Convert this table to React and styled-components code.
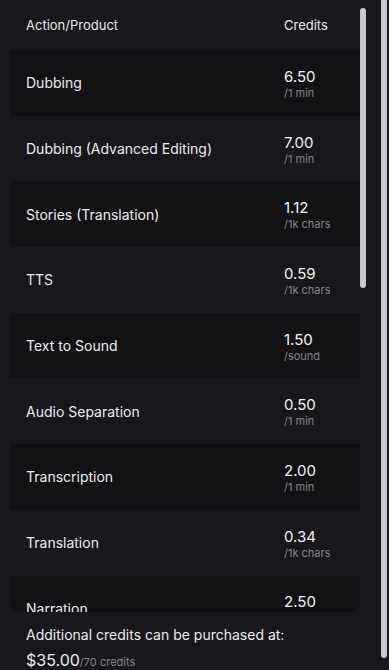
import { createGlobalStyle, styled } from "styled-components";

const rates = [
  { name: "Dubbing", price: "6.50", unit: "/1 min" },
  { name: "Dubbing (Advanced Editing)", price: "7.00", unit: "/1 min" },
  { name: "Stories (Translation)", price: "1.12", unit: "/1k chars" },
  { name: "TTS", price: "0.59", unit: "/1k chars" },
  { name: "Text to Sound", price: "1.50", unit: "/sound" },
  { name: "Audio Separation", price: "0.50", unit: "/1 min" },
  { name: "Transcription", price: "2.00", unit: "/1 min" },
  { name: "Translation", price: "0.34", unit: "/1k chars" },
  { name: "Narration", price: "2.50", unit: "/1 min" },
];

const App = () => {
  return (
    <Page>
      <GlobalStyle />
      <Frame>
        <Panel>
          <HeaderRow>
            <span>Action/Product</span>
            <span>Credits</span>
          </HeaderRow>
          {rates.map((r, i) => (
            <Row key={r.name} $dark={i % 2 === 0}>
              <Name>{r.name}</Name>
              <Value>
                <Price>{r.price}</Price>
                <Unit>{r.unit}</Unit>
              </Value>
            </Row>
          ))}
        </Panel>
        <ScrollThumb />
      </Frame>
      <Footer>
        <p>Additional credits can be purchased at:</p>
        <Total>
          $35.00<small>/70 credits</small>
        </Total>
      </Footer>
      <PageThumb />
    </Page>
  );
};

export default App;

const GlobalStyle = createGlobalStyle`
  html, body {
    margin: 0;
    background: #18171c;
    color: #ececee;
    font-family: Inter, "Noto Sans", sans-serif;
  }
  html {
    scrollbar-width: none;
  }
`;

const Page = styled.div`
  padding: 0 29px 0 10px;
`;

const Frame = styled.div`
  position: relative;
`;

const Panel = styled.div`
  height: 612px;
  overflow: hidden;
  border-radius: 0 0 10px 10px;
`;

/* custom scrollbar thumbs, drawn over the content */
const ScrollThumb = styled.div`
  position: absolute;
  top: 8px;
  right: -6px;
  width: 6px;
  height: 280px;
  border-radius: 3px;
  background: #c9c8cd;
`;

const PageThumb = styled.div`
  position: fixed;
  top: 0;
  right: 2px;
  width: 6px;
  height: 658px;
  border-radius: 0 0 3px 3px;
  background: #c9c8cd;
`;

const HeaderRow = styled.div`
  display: grid;
  grid-template-columns: 1fr 76px;
  align-items: center;
  height: 50px;
  padding-left: 16px;
  font-size: 13px;
  color: #e8e8ea;
`;

const Row = styled.div`
  display: grid;
  grid-template-columns: 1fr 76px;
  align-items: center;
  height: 65.7px;
  padding-left: 16px;
  background: ${(p) => (p.$dark ? "#121214" : "transparent")};
`;

const Name = styled.div`
  font-size: 14px;
`;

const Value = styled.div`
  display: flex;
  flex-direction: column;
  padding-top: 2px;
`;

const Price = styled.span`
  font-size: 15px;
  line-height: 18px;
  color: #f2f2f4;
`;

const Unit = styled.span`
  font-size: 11px;
  line-height: 14px;
  color: #85848b;
`;

const Footer = styled.div`
  padding: 12px 16px 0;
  p {
    margin: 0;
    font-size: 14px;
    line-height: 22px;
  }
`;

const Total = styled.div`
  margin-top: 2px;
  font-size: 16px;
  line-height: 24px;
  small {
    font-size: 11px;
    color: #85848b;
  }
`;
